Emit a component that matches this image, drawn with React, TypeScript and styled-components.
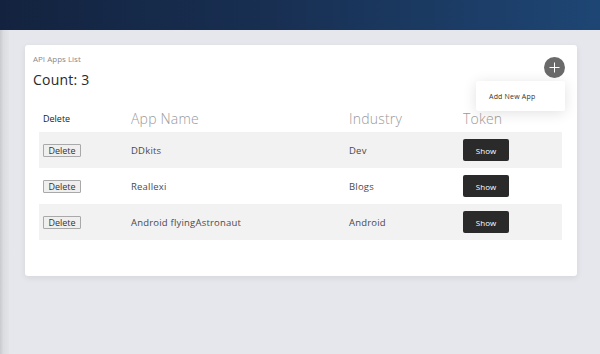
import React from "react";
import styled, { createGlobalStyle } from "styled-components";

type AppRow = {
  name: string;
  industry: string;
};

const apps: AppRow[] = [
  { name: "DDkits", industry: "Dev" },
  { name: "Reallexi", industry: "Blogs" },
  { name: "Android flyingAstronaut", industry: "Android" },
];

const GlobalStyle = createGlobalStyle`
  html, body {
    margin: 0;
    padding: 0;
    background: #e6e7ec;
    font-family: "Open Sans", "DejaVu Sans", sans-serif;
  }
  * {
    box-sizing: border-box;
  }
`;

export default function App() {
  return (
    <>
      <GlobalStyle />
      <SPage>
        <STopBar />
        <SBody>
          <SSideEdge />
          <SMain>
            <SCard>
              <SCaption>API Apps List</SCaption>
              <SCount>Count: {apps.length}</SCount>

              <SAddButton aria-label="add">
                <svg width="11" height="11" viewBox="0 0 11 11">
                  <path d="M5.5 0.5v10M0.5 5.5h10" stroke="#fff" strokeWidth="1" />
                </svg>
              </SAddButton>
              <SMenu>
                <SMenuItem>Add New App</SMenuItem>
              </SMenu>

              <STable>
                <SHeadRow>
                  <SSmallHead>Delete</SSmallHead>
                  <SHead>App Name</SHead>
                  <SHead>Industry</SHead>
                  <SHead>Token</SHead>
                </SHeadRow>
                {apps.map((app, i) => (
                  <SRow key={app.name} $striped={i % 2 === 0}>
                    <SCell>
                      <SDeleteButton>Delete</SDeleteButton>
                    </SCell>
                    <SCell>{app.name}</SCell>
                    <SCell>{app.industry}</SCell>
                    <SCell>
                      <SShowButton>Show</SShowButton>
                    </SCell>
                  </SRow>
                ))}
              </STable>
            </SCard>
          </SMain>
        </SBody>
      </SPage>
    </>
  );
}

const SPage = styled.div`
  display: flex;
  flex-direction: column;
  width: 600px;
  height: 354px;
  overflow: hidden;
`;

const STopBar = styled.header`
  height: 30px;
  flex-shrink: 0;
  background: linear-gradient(90deg, #13233f 0%, #182f52 45%, #1e4674 100%);
`;

const SBody = styled.div`
  display: flex;
  flex: 1;
`;

const SSideEdge = styled.div`
  width: 9px;
  flex-shrink: 0;
  background: linear-gradient(90deg, #c9cacf 0%, #dcdde1 40%, #e3e4e8 100%);
`;

const SMain = styled.main`
  flex: 1;
  padding: 15px 23px 0 16px;
`;

const SCard = styled.section`
  position: relative;
  height: 231px;
  background: #fff;
  border-radius: 3px;
  box-shadow: 0 2px 6px rgba(0, 0, 0, 0.08);
  padding: 8px 15px 0 8px;
`;

const SCaption = styled.div`
  font-size: 8px;
  color: #8a8a8a;
  line-height: 11px;
`;

const SCount = styled.div`
  margin-top: 7px;
  font-size: 14px;
  color: #2a2a2a;
  line-height: 18px;
  font-weight: 400;
  letter-spacing: 0.2px;
`;

const SAddButton = styled.button`
  position: absolute;
  top: 12px;
  right: 12px;
  width: 21px;
  height: 21px;
  border-radius: 50%;
  border: none;
  padding: 0;
  display: flex;
  align-items: center;
  justify-content: center;
  background: #6a6a6a;
`;

const SMenu = styled.div`
  position: absolute;
  top: 36px;
  right: 12px;
  width: 89px;
  height: 30px;
  background: #fff;
  border-radius: 2px;
  box-shadow: 0 2px 14px rgba(0, 0, 0, 0.12);
  display: flex;
  align-items: center;
  padding-left: 13px;
  z-index: 1;
`;

const SMenuItem = styled.div`
  font-size: 7px;
  color: #333;
  letter-spacing: 0.2px;
`;

const STable = styled.div`
  margin-top: 16px;
  margin-left: 6px;
`;

const SGridRow = styled.div`
  display: grid;
  grid-template-columns: 88px 218px 114px 1fr;
  align-items: center;
`;

const SHeadRow = styled(SGridRow)`
  height: 27px;
`;

const SHead = styled.div`
  padding-left: 4px;
  font-size: 14px;
  font-weight: 300;
  color: #9a9a9a;
  letter-spacing: 0.2px;
`;

const SSmallHead = styled.div`
  padding-left: 4px;
  font-size: 9px;
  color: #222;
`;

const SRow = styled(SGridRow)<{ $striped: boolean }>`
  height: 36px;
  background: ${({ $striped }) => ($striped ? "#f2f2f2" : "#fff")};
`;

const SCell = styled.div`
  padding-left: 4px;
  font-size: 9.5px;
  color: #4a4a4a;
  letter-spacing: 0.2px;
`;

const SDeleteButton = styled.button`
  width: 38px;
  height: 13px;
  padding: 0;
  font-family: inherit;
  font-size: 9px;
  line-height: 11px;
  color: #333;
  background: #efefef;
  border: 1px solid #a9a9a9;
  border-radius: 1px;
`;

const SShowButton = styled.button`
  width: 46px;
  height: 22px;
  padding: 0;
  border: none;
  border-radius: 2px;
  background: #2a2a2a;
  color: #fff;
  font-family: inherit;
  font-size: 8px;
`;
